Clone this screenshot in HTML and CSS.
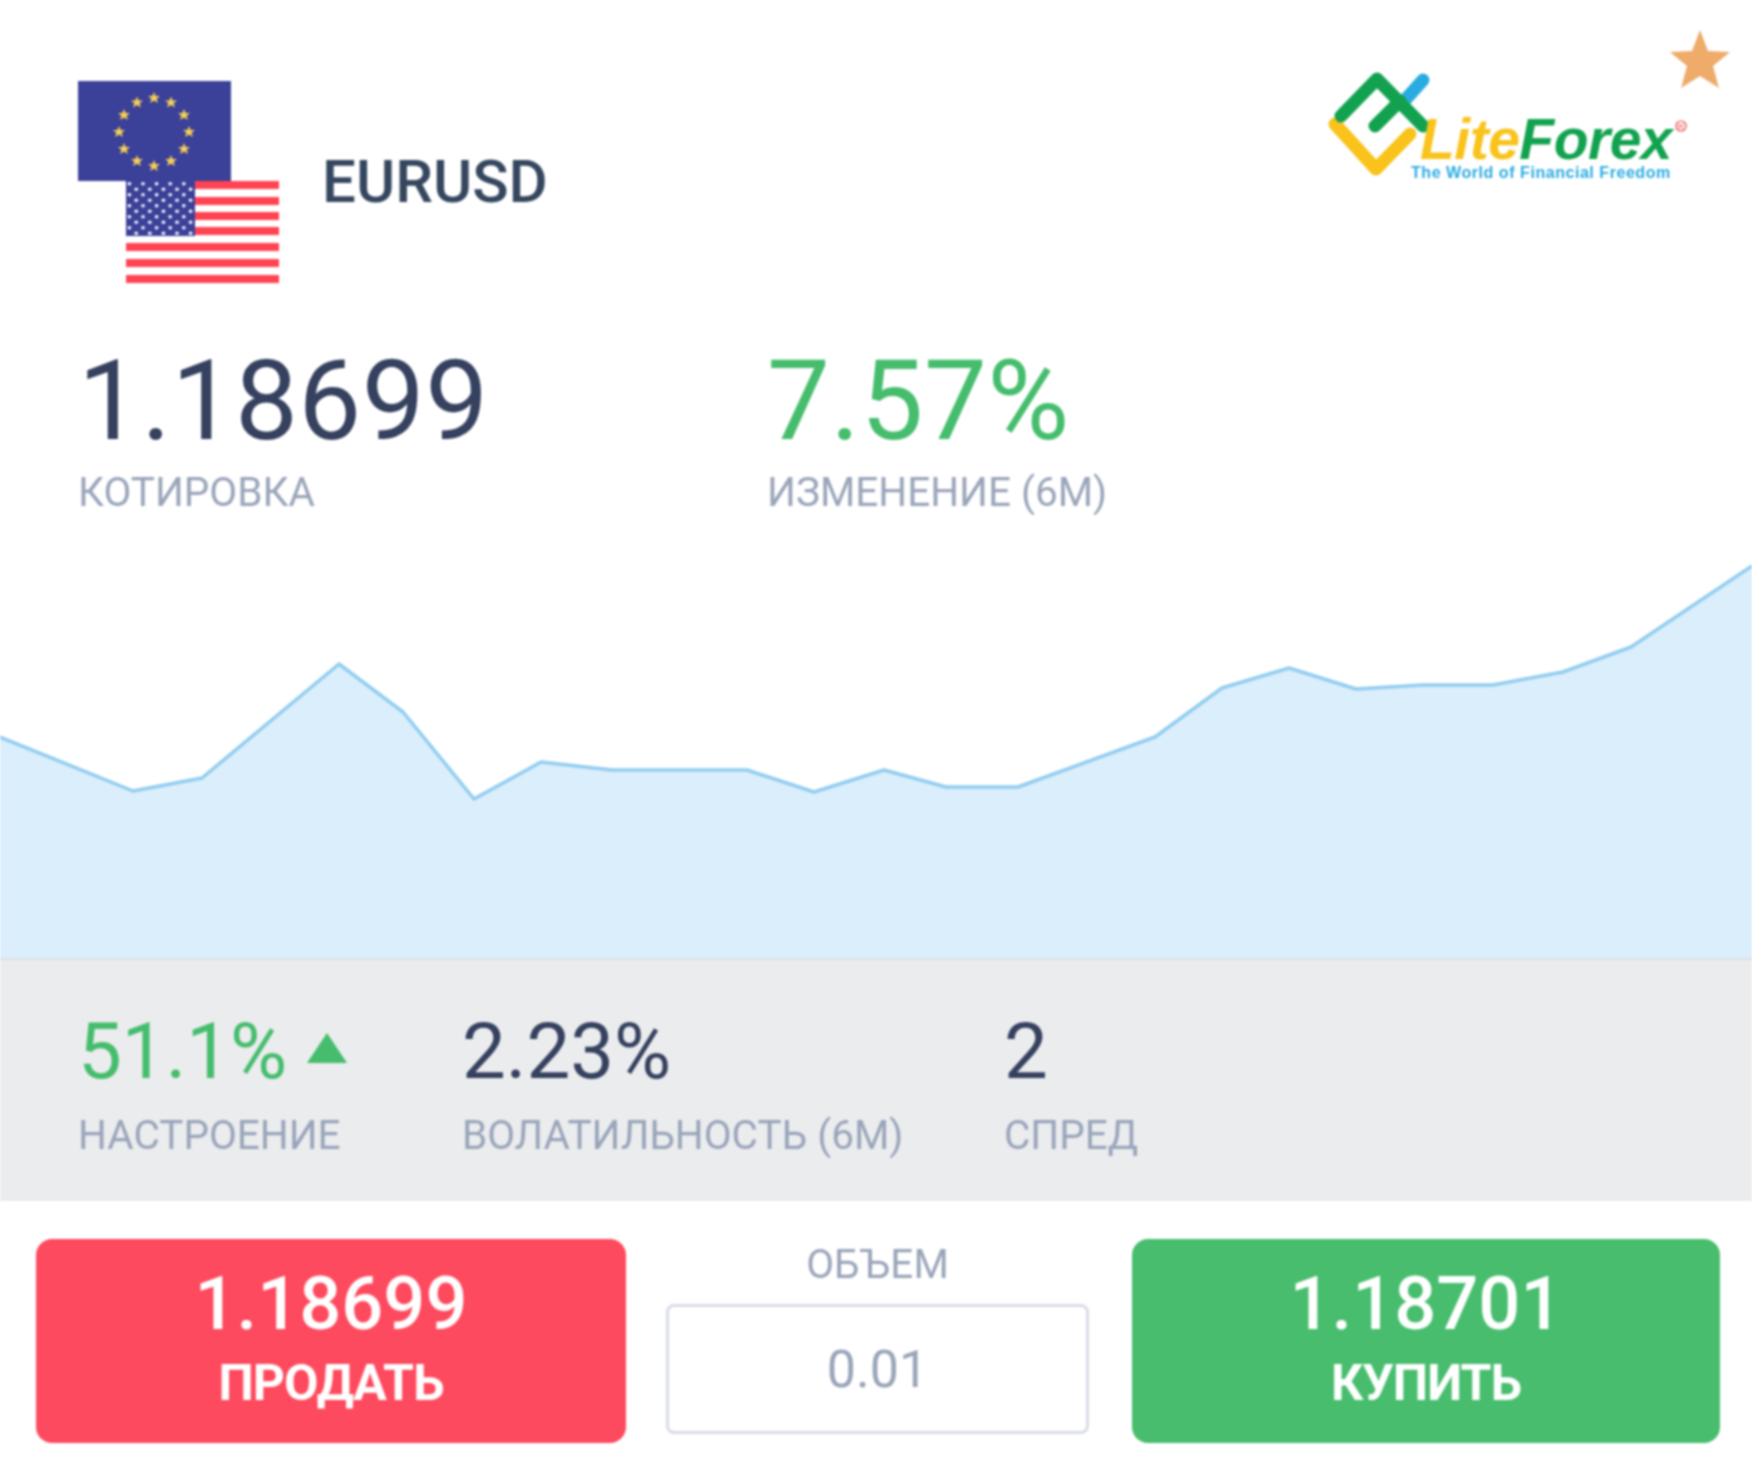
FILE: index.html
```html
<!DOCTYPE html>
<html lang="ru">
<head>
<meta charset="utf-8">
<title>EURUSD</title>
<link rel="stylesheet" href="styles.css">
</head>
<body>
<main class="card">
  <svg class="fav" viewBox="0 0 60 58" width="60" height="58" aria-hidden="true"><polygon points="30,0 38,21 60,22 43,36 49,58 30,46 11,58 17,36 0,22 22,21"/></svg>
  <header class="head">
    <div class="pair">
      <div class="flags">
        <svg class="flag" viewBox="0 0 153 100" width="153" height="100" aria-hidden="true">
          <rect width="153" height="100" fill="#3b4099"/>
          <g fill="#f5d056">
            <polygon id="s" points="76,11 77.6,15 82,15 78.6,17.8 80,22 76,19.6 72,22 73.4,17.8 70,15 74.4,15"/>
            <use href="#s" x="-17" y="4.5"/><use href="#s" x="17" y="4.5"/>
            <use href="#s" x="-30" y="17"/><use href="#s" x="30" y="17"/>
            <use href="#s" x="-35" y="34"/><use href="#s" x="35" y="34"/>
            <use href="#s" x="-30" y="51"/><use href="#s" x="30" y="51"/>
            <use href="#s" x="-17" y="63"/><use href="#s" x="17" y="63"/>
            <use href="#s" x="0" y="68"/>
          </g>
        </svg>
        <svg class="flag flag-us" viewBox="0 0 153 102" width="153" height="102" aria-hidden="true">
          <defs>
            <pattern id="st" width="13.6" height="11" patternUnits="userSpaceOnUse">
              <circle cx="3.4" cy="2.8" r="1.8" fill="#fff"/><circle cx="10.2" cy="8.2" r="1.8" fill="#fff"/>
            </pattern>
          </defs>
          <rect width="153" height="102" fill="#fff"/>
          <g fill="#fe4352">
            <rect y="0" width="153" height="8"/><rect y="16" width="153" height="8"/><rect y="31" width="153" height="8"/><rect y="46" width="153" height="8"/><rect y="62" width="153" height="8"/><rect y="78" width="153" height="8"/><rect y="94" width="153" height="8"/>
          </g>
          <rect width="69" height="55" fill="#3b4099"/>
          <rect width="69" height="55" fill="url(#st)"/>
        </svg>
      </div>
      <h1 class="symbol">EURUSD</h1>
    </div>
    <svg class="logo" viewBox="0 0 372 110" width="372" height="110" role="img" aria-label="LiteForex">
      <g fill="none" stroke-linecap="round" stroke-linejoin="round" stroke-width="13">
        <path stroke="#29abe2" d="M80 27 L97 8"/>
        <path stroke="#f9c31c" d="M9 52 L50 97 L84 62"/>
        <path stroke="#12a24f" d="M15 44 L51 7 L97 54 M49 54 L74 29"/>
      </g>
      <text class="logo-name" x="94" y="87"><tspan fill="#f9c31c">Lite</tspan><tspan fill="#12a24f">Forex</tspan></text>
      <text class="logo-tag" x="85" y="106">The World of Financial Freedom</text>
      <circle cx="355" cy="54" r="5" fill="none" stroke="#e2423c" stroke-width="1.2"/>
      <text class="logo-r" x="355" y="57">R</text>
    </svg>
  </header>

  <section class="quotes">
    <div class="quote">
      <div class="big">1.18699</div>
      <div class="label">КОТИРОВКА</div>
    </div>
    <div class="quote">
      <div class="big up">7.57%</div>
      <div class="label">ИЗМЕНЕНИЕ (6М)</div>
    </div>
  </section>

  <svg class="chart" viewBox="0 0 1752 418" width="1752" height="418" aria-hidden="true">
    <path class="area" d="M0 197 L133 251 L202 238 L339 124 L403 172 L474 259 L541 222 L612 230 L747 230 L814 252 L884 230 L946 247 L1018 247 L1155 197 L1222 148 L1289 128 L1356 149 L1423 145 L1493 145 L1563 132 L1631 107 L1752 26 L1752 418 L0 418 Z"/>
    <path class="line" d="M0 197 L133 251 L202 238 L339 124 L403 172 L474 259 L541 222 L612 230 L747 230 L814 252 L884 230 L946 247 L1018 247 L1155 197 L1222 148 L1289 128 L1356 149 L1423 145 L1493 145 L1563 132 L1631 107 L1752 26"/>
  </svg>

  <section class="band">
    <div class="metric m-mood">
      <div class="mid up">51.1%<svg class="tri" viewBox="0 0 40 30" width="40" height="30" aria-hidden="true"><polygon points="20,0 40,30 0,30"/></svg></div>
      <div class="label">НАСТРОЕНИЕ</div>
    </div>
    <div class="metric m-vol">
      <div class="mid">2.23%</div>
      <div class="label">ВОЛАТИЛЬНОСТЬ (6М)</div>
    </div>
    <div class="metric">
      <div class="mid">2</div>
      <div class="label">СПРЕД</div>
    </div>
  </section>

  <section class="actions">
    <button class="trade sell"><span class="price">1.18699</span><span class="verb">ПРОДАТЬ</span></button>
    <div class="volume">
      <div class="label vol-label">ОБЪЕМ</div>
      <div class="vol-input">0.01</div>
    </div>
    <button class="trade buy"><span class="price">1.18701</span><span class="verb">КУПИТЬ</span></button>
  </section>
</main>
</body>
</html>
```
FILE: styles.css
```css
* { box-sizing: border-box; }
html, body { margin: 0; padding: 0; background: #fff; }
body { font-family: Roboto, "Noto Sans", sans-serif; color: #35415f; }
.card { position: relative; width: 1752px; height: 1476px; display: flex; flex-direction: column; overflow: hidden; background: #fff; filter: blur(0.9px); }
.fav { position: absolute; left: 1670px; top: 30px; fill: #eeab6a; }
.head { height: 283px; padding: 81px 54px 0 78px; display: flex; justify-content: space-between; align-items: flex-start; }
.pair { display: flex; align-items: center; gap: 43px; }
.flags { width: 201px; }
.flag { display: block; }
.flag-us { margin-left: 48px; }
.symbol { margin: 0; font-size: 60px; font-weight: 500; line-height: 70px; letter-spacing: 0; color: #35465f; }
.logo { display: block; margin-top: -9px; }
.logo-name { font: italic 700 57px "Liberation Sans", sans-serif; letter-spacing: -.5px; }
.logo-tag { font: 700 16px "Liberation Sans", sans-serif; fill: #29abe2; letter-spacing: .55px; }
.logo-r { font: 400 8px "Liberation Sans", sans-serif; fill: #e2423c; text-anchor: middle; }
.quotes { height: 257px; padding: 62px 0 0 78px; display: flex; }
.quote:first-child { width: 689px; }
.big { font-size: 112px; font-weight: 400; line-height: 112px; letter-spacing: .5px; }
.up { color: #45bd6d; }
.label { font-size: 40.5px; font-weight: 400; line-height: 44px; color: #9aa5ba; letter-spacing: 0; margin-top: 13px; white-space: nowrap; }
.chart { display: block; flex: none; }
.area { fill: #dbeefb; }
.line { fill: none; stroke: #92cdf0; stroke-width: 3.5; stroke-linejoin: round; }
.band { height: 243px; background: #ebecee; border-top: 2px solid #dddfe3; padding: 52px 0 0 78px; display: flex; }
.m-mood { width: 384px; }
.m-vol { width: 542px; }
.mid { font-size: 78px; font-weight: 400; line-height: 80px; display: flex; align-items: flex-start; white-space: nowrap; }
.tri { margin: 21px 0 0 20px; fill: #45bd6d; }
.band .label { margin-top: 21px; }
.actions { flex: 1; padding: 38px 32px 0 36px; display: flex; align-items: flex-start; }
.trade { width: 590px; height: 204px; border: 0; border-radius: 16px; color: #fff; font-family: inherit; display: flex; flex-direction: column; align-items: center; padding: 25px 0 0; }
.sell { background: #fe4a5e; }
.buy { background: #48bd6e; width: 588px; margin-left: 43px; }
.price { font-size: 74px; font-weight: 500; line-height: 80px; }
.verb { font-size: 50px; font-weight: 700; line-height: 58px; margin-top: 10px; letter-spacing: -1px; }
.volume { width: 423px; margin-left: 40px; display: flex; flex-direction: column; align-items: center; }
.vol-label { margin-top: 3px; line-height: 44px; }
.vol-input { margin-top: 18px; width: 100%; height: 130px; border: 3px solid #d9dce7; border-radius: 8px; background: #fff; color: #9aa5ba; font-size: 52px; font-weight: 400; display: flex; align-items: center; justify-content: center; }
```
